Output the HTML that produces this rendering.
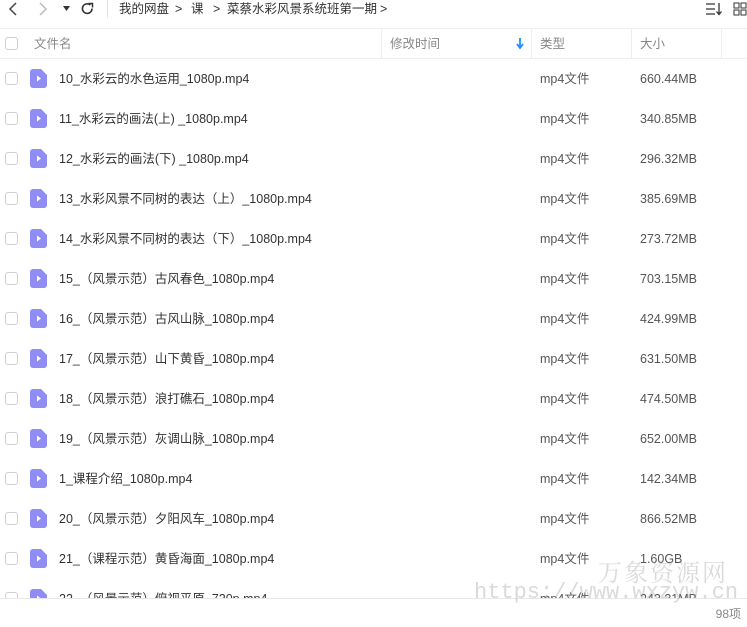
<!DOCTYPE html>
<html><head><meta charset="utf-8"><style>
*{margin:0;padding:0;box-sizing:border-box}
body{width:747px;height:627px;overflow:hidden;background:#fff;font-family:"Liberation Sans","Noto Sans CJK SC",sans-serif;color:#333;position:relative}
span{display:block;line-height:18px;white-space:nowrap}
.top{position:absolute;left:0;top:0;width:747px;height:28px;font-size:12.5px}
.t{position:absolute;top:0px}
.hdr{position:absolute;left:0;top:28px;width:747px;height:31px;border-top:1px solid #eee;border-bottom:1px solid #eee;font-size:12.5px;color:#888}
.sep{position:absolute;top:0;width:1px;height:29px;background:#eee}
.cb{position:absolute;width:13px;height:13px;border:1px solid #d0d0d0;border-radius:3px;background:#fff}
.row{position:absolute;left:0;width:747px;height:40px;font-size:12.5px;color:#333}
.row .cb{left:5px;top:13px}
.ic{position:absolute;left:30px;top:10px}
.nm{position:absolute;left:59px;top:11px}
.ty{position:absolute;left:540px;top:11px;color:#555}
.sz{position:absolute;left:640px;top:11px;color:#555}
.clip{position:absolute;left:0;top:59px;width:747px;height:539px;overflow:hidden}
.foot{position:absolute;left:0;top:598px;width:747px;height:29px;border-top:1px solid #e8e8e8}
.wm{position:absolute;color:rgba(150,150,150,.35);white-space:nowrap}
</style></head><body>
<div class="top">
<svg style="position:absolute;left:7px;top:1px" width="12" height="16"><path d="M9 2L3 8l6 6" stroke="#444" stroke-width="1.5" fill="none"/></svg>
<svg style="position:absolute;left:37px;top:1px" width="12" height="16"><path d="M3 2l6 6-6 6" stroke="#bbb" stroke-width="1.5" fill="none"/></svg>
<svg style="position:absolute;left:63px;top:5px" width="8" height="8"><path d="M0 1h7L3.5 6z" fill="#333"/></svg>
<svg style="position:absolute;left:80px;top:1px" width="15" height="15"><path d="M12 7.5A4.8 4.8 0 1 1 10.4 4" stroke="#333" stroke-width="1.6" fill="none"/><path d="M8.5 2.5h4v4" stroke="#333" stroke-width="1.5" fill="none"/></svg>
<div style="position:absolute;left:107px;top:0px;width:1px;height:18px;background:#e5e5e5"></div>
<span class="t" style="left:119px">我的网盘</span><span class="t" style="left:175px">&gt;</span>
<span class="t" style="left:191px">课</span><span class="t" style="left:213px">&gt;</span>
<span class="t" style="left:227px">菜蔡水彩风景系统班第一期</span><span class="t" style="left:380px">&gt;</span>
<svg style="position:absolute;left:705px;top:2px" width="18" height="14"><path d="M1 2h9M1 7h9M1 12h9" stroke="#333" stroke-width="1.3"/><path d="M14 1v11M11.5 9.5l2.5 3 2.5-3" stroke="#333" stroke-width="1.3" fill="none"/></svg>
<svg style="position:absolute;left:733px;top:2px" width="14" height="14"><rect x="1" y="1" width="5" height="5" stroke="#333" fill="none"/><rect x="8" y="1" width="5" height="5" stroke="#333" fill="none"/><rect x="1" y="8" width="5" height="5" stroke="#333" fill="none"/><rect x="8" y="8" width="5" height="5" stroke="#333" fill="none"/></svg>
</div>
<div class="hdr">
<div class="cb" style="left:5px;top:8px"></div>
<span style="position:absolute;left:34px;top:6px">文件名</span>
<div class="sep" style="left:381px"></div>
<span style="position:absolute;left:390px;top:6px">修改时间</span>
<svg style="position:absolute;left:516px;top:9px" width="8" height="12"><path d="M4 0v9M1 6l3 4 3-4" stroke="#1e90ff" stroke-width="1.8" fill="none"/></svg>
<div class="sep" style="left:531px"></div>
<span style="position:absolute;left:540px;top:6px">类型</span>
<div class="sep" style="left:631px"></div>
<span style="position:absolute;left:640px;top:6px">大小</span>
<div class="sep" style="left:721px"></div>
</div>
<div class="clip">
<div class="row" style="top:0"><div class="cb"></div><svg class="ic" width="17" height="19"><path d="M3 0h8l6 6v10a3 3 0 0 1-3 3H3a3 3 0 0 1-3-3V3a3 3 0 0 1 3-3z" fill="#8f8cf4"/><path d="M7 6.5l4 3-4 3z" fill="#fff"/></svg><span class="nm">10_水彩云的水色运用_1080p.mp4</span><span class="ty">mp4文件</span><span class="sz">660.44MB</span></div>
<div class="row" style="top:40px"><div class="cb"></div><svg class="ic" width="17" height="19"><path d="M3 0h8l6 6v10a3 3 0 0 1-3 3H3a3 3 0 0 1-3-3V3a3 3 0 0 1 3-3z" fill="#8f8cf4"/><path d="M7 6.5l4 3-4 3z" fill="#fff"/></svg><span class="nm">11_水彩云的画法(上) _1080p.mp4</span><span class="ty">mp4文件</span><span class="sz">340.85MB</span></div>
<div class="row" style="top:80px"><div class="cb"></div><svg class="ic" width="17" height="19"><path d="M3 0h8l6 6v10a3 3 0 0 1-3 3H3a3 3 0 0 1-3-3V3a3 3 0 0 1 3-3z" fill="#8f8cf4"/><path d="M7 6.5l4 3-4 3z" fill="#fff"/></svg><span class="nm">12_水彩云的画法(下) _1080p.mp4</span><span class="ty">mp4文件</span><span class="sz">296.32MB</span></div>
<div class="row" style="top:120px"><div class="cb"></div><svg class="ic" width="17" height="19"><path d="M3 0h8l6 6v10a3 3 0 0 1-3 3H3a3 3 0 0 1-3-3V3a3 3 0 0 1 3-3z" fill="#8f8cf4"/><path d="M7 6.5l4 3-4 3z" fill="#fff"/></svg><span class="nm">13_水彩风景不同树的表达（上）_1080p.mp4</span><span class="ty">mp4文件</span><span class="sz">385.69MB</span></div>
<div class="row" style="top:160px"><div class="cb"></div><svg class="ic" width="17" height="19"><path d="M3 0h8l6 6v10a3 3 0 0 1-3 3H3a3 3 0 0 1-3-3V3a3 3 0 0 1 3-3z" fill="#8f8cf4"/><path d="M7 6.5l4 3-4 3z" fill="#fff"/></svg><span class="nm">14_水彩风景不同树的表达（下）_1080p.mp4</span><span class="ty">mp4文件</span><span class="sz">273.72MB</span></div>
<div class="row" style="top:200px"><div class="cb"></div><svg class="ic" width="17" height="19"><path d="M3 0h8l6 6v10a3 3 0 0 1-3 3H3a3 3 0 0 1-3-3V3a3 3 0 0 1 3-3z" fill="#8f8cf4"/><path d="M7 6.5l4 3-4 3z" fill="#fff"/></svg><span class="nm">15_（风景示范）古风春色_1080p.mp4</span><span class="ty">mp4文件</span><span class="sz">703.15MB</span></div>
<div class="row" style="top:240px"><div class="cb"></div><svg class="ic" width="17" height="19"><path d="M3 0h8l6 6v10a3 3 0 0 1-3 3H3a3 3 0 0 1-3-3V3a3 3 0 0 1 3-3z" fill="#8f8cf4"/><path d="M7 6.5l4 3-4 3z" fill="#fff"/></svg><span class="nm">16_（风景示范）古风山脉_1080p.mp4</span><span class="ty">mp4文件</span><span class="sz">424.99MB</span></div>
<div class="row" style="top:280px"><div class="cb"></div><svg class="ic" width="17" height="19"><path d="M3 0h8l6 6v10a3 3 0 0 1-3 3H3a3 3 0 0 1-3-3V3a3 3 0 0 1 3-3z" fill="#8f8cf4"/><path d="M7 6.5l4 3-4 3z" fill="#fff"/></svg><span class="nm">17_（风景示范）山下黄昏_1080p.mp4</span><span class="ty">mp4文件</span><span class="sz">631.50MB</span></div>
<div class="row" style="top:320px"><div class="cb"></div><svg class="ic" width="17" height="19"><path d="M3 0h8l6 6v10a3 3 0 0 1-3 3H3a3 3 0 0 1-3-3V3a3 3 0 0 1 3-3z" fill="#8f8cf4"/><path d="M7 6.5l4 3-4 3z" fill="#fff"/></svg><span class="nm">18_（风景示范）浪打礁石_1080p.mp4</span><span class="ty">mp4文件</span><span class="sz">474.50MB</span></div>
<div class="row" style="top:360px"><div class="cb"></div><svg class="ic" width="17" height="19"><path d="M3 0h8l6 6v10a3 3 0 0 1-3 3H3a3 3 0 0 1-3-3V3a3 3 0 0 1 3-3z" fill="#8f8cf4"/><path d="M7 6.5l4 3-4 3z" fill="#fff"/></svg><span class="nm">19_（风景示范）灰调山脉_1080p.mp4</span><span class="ty">mp4文件</span><span class="sz">652.00MB</span></div>
<div class="row" style="top:400px"><div class="cb"></div><svg class="ic" width="17" height="19"><path d="M3 0h8l6 6v10a3 3 0 0 1-3 3H3a3 3 0 0 1-3-3V3a3 3 0 0 1 3-3z" fill="#8f8cf4"/><path d="M7 6.5l4 3-4 3z" fill="#fff"/></svg><span class="nm">1_课程介绍_1080p.mp4</span><span class="ty">mp4文件</span><span class="sz">142.34MB</span></div>
<div class="row" style="top:440px"><div class="cb"></div><svg class="ic" width="17" height="19"><path d="M3 0h8l6 6v10a3 3 0 0 1-3 3H3a3 3 0 0 1-3-3V3a3 3 0 0 1 3-3z" fill="#8f8cf4"/><path d="M7 6.5l4 3-4 3z" fill="#fff"/></svg><span class="nm">20_（风景示范）夕阳风车_1080p.mp4</span><span class="ty">mp4文件</span><span class="sz">866.52MB</span></div>
<div class="row" style="top:480px"><div class="cb"></div><svg class="ic" width="17" height="19"><path d="M3 0h8l6 6v10a3 3 0 0 1-3 3H3a3 3 0 0 1-3-3V3a3 3 0 0 1 3-3z" fill="#8f8cf4"/><path d="M7 6.5l4 3-4 3z" fill="#fff"/></svg><span class="nm">21_（课程示范）黄昏海面_1080p.mp4</span><span class="ty">mp4文件</span><span class="sz">1.60GB</span></div>
<div class="row" style="top:520px"><div class="cb"></div><svg class="ic" width="17" height="19"><path d="M3 0h8l6 6v10a3 3 0 0 1-3 3H3a3 3 0 0 1-3-3V3a3 3 0 0 1 3-3z" fill="#8f8cf4"/><path d="M7 6.5l4 3-4 3z" fill="#fff"/></svg><span class="nm">22_（风景示范）俯视平原_720p.mp4</span><span class="ty">mp4文件</span><span class="sz">243.31MB</span></div>
</div>
<div class="foot"><span style="position:absolute;right:6px;top:6px;font-size:12px;color:#888">98项</span></div>
<div class="wm" style="left:598px;top:553px;font-size:24px;font-family:'Noto Serif CJK SC',serif;letter-spacing:2px">万象资源网</div>
<div class="wm" style="left:474px;top:580px;font-size:22px;font-family:'Liberation Mono',monospace">https://www.wxzyw.cn</div>
</body></html>
